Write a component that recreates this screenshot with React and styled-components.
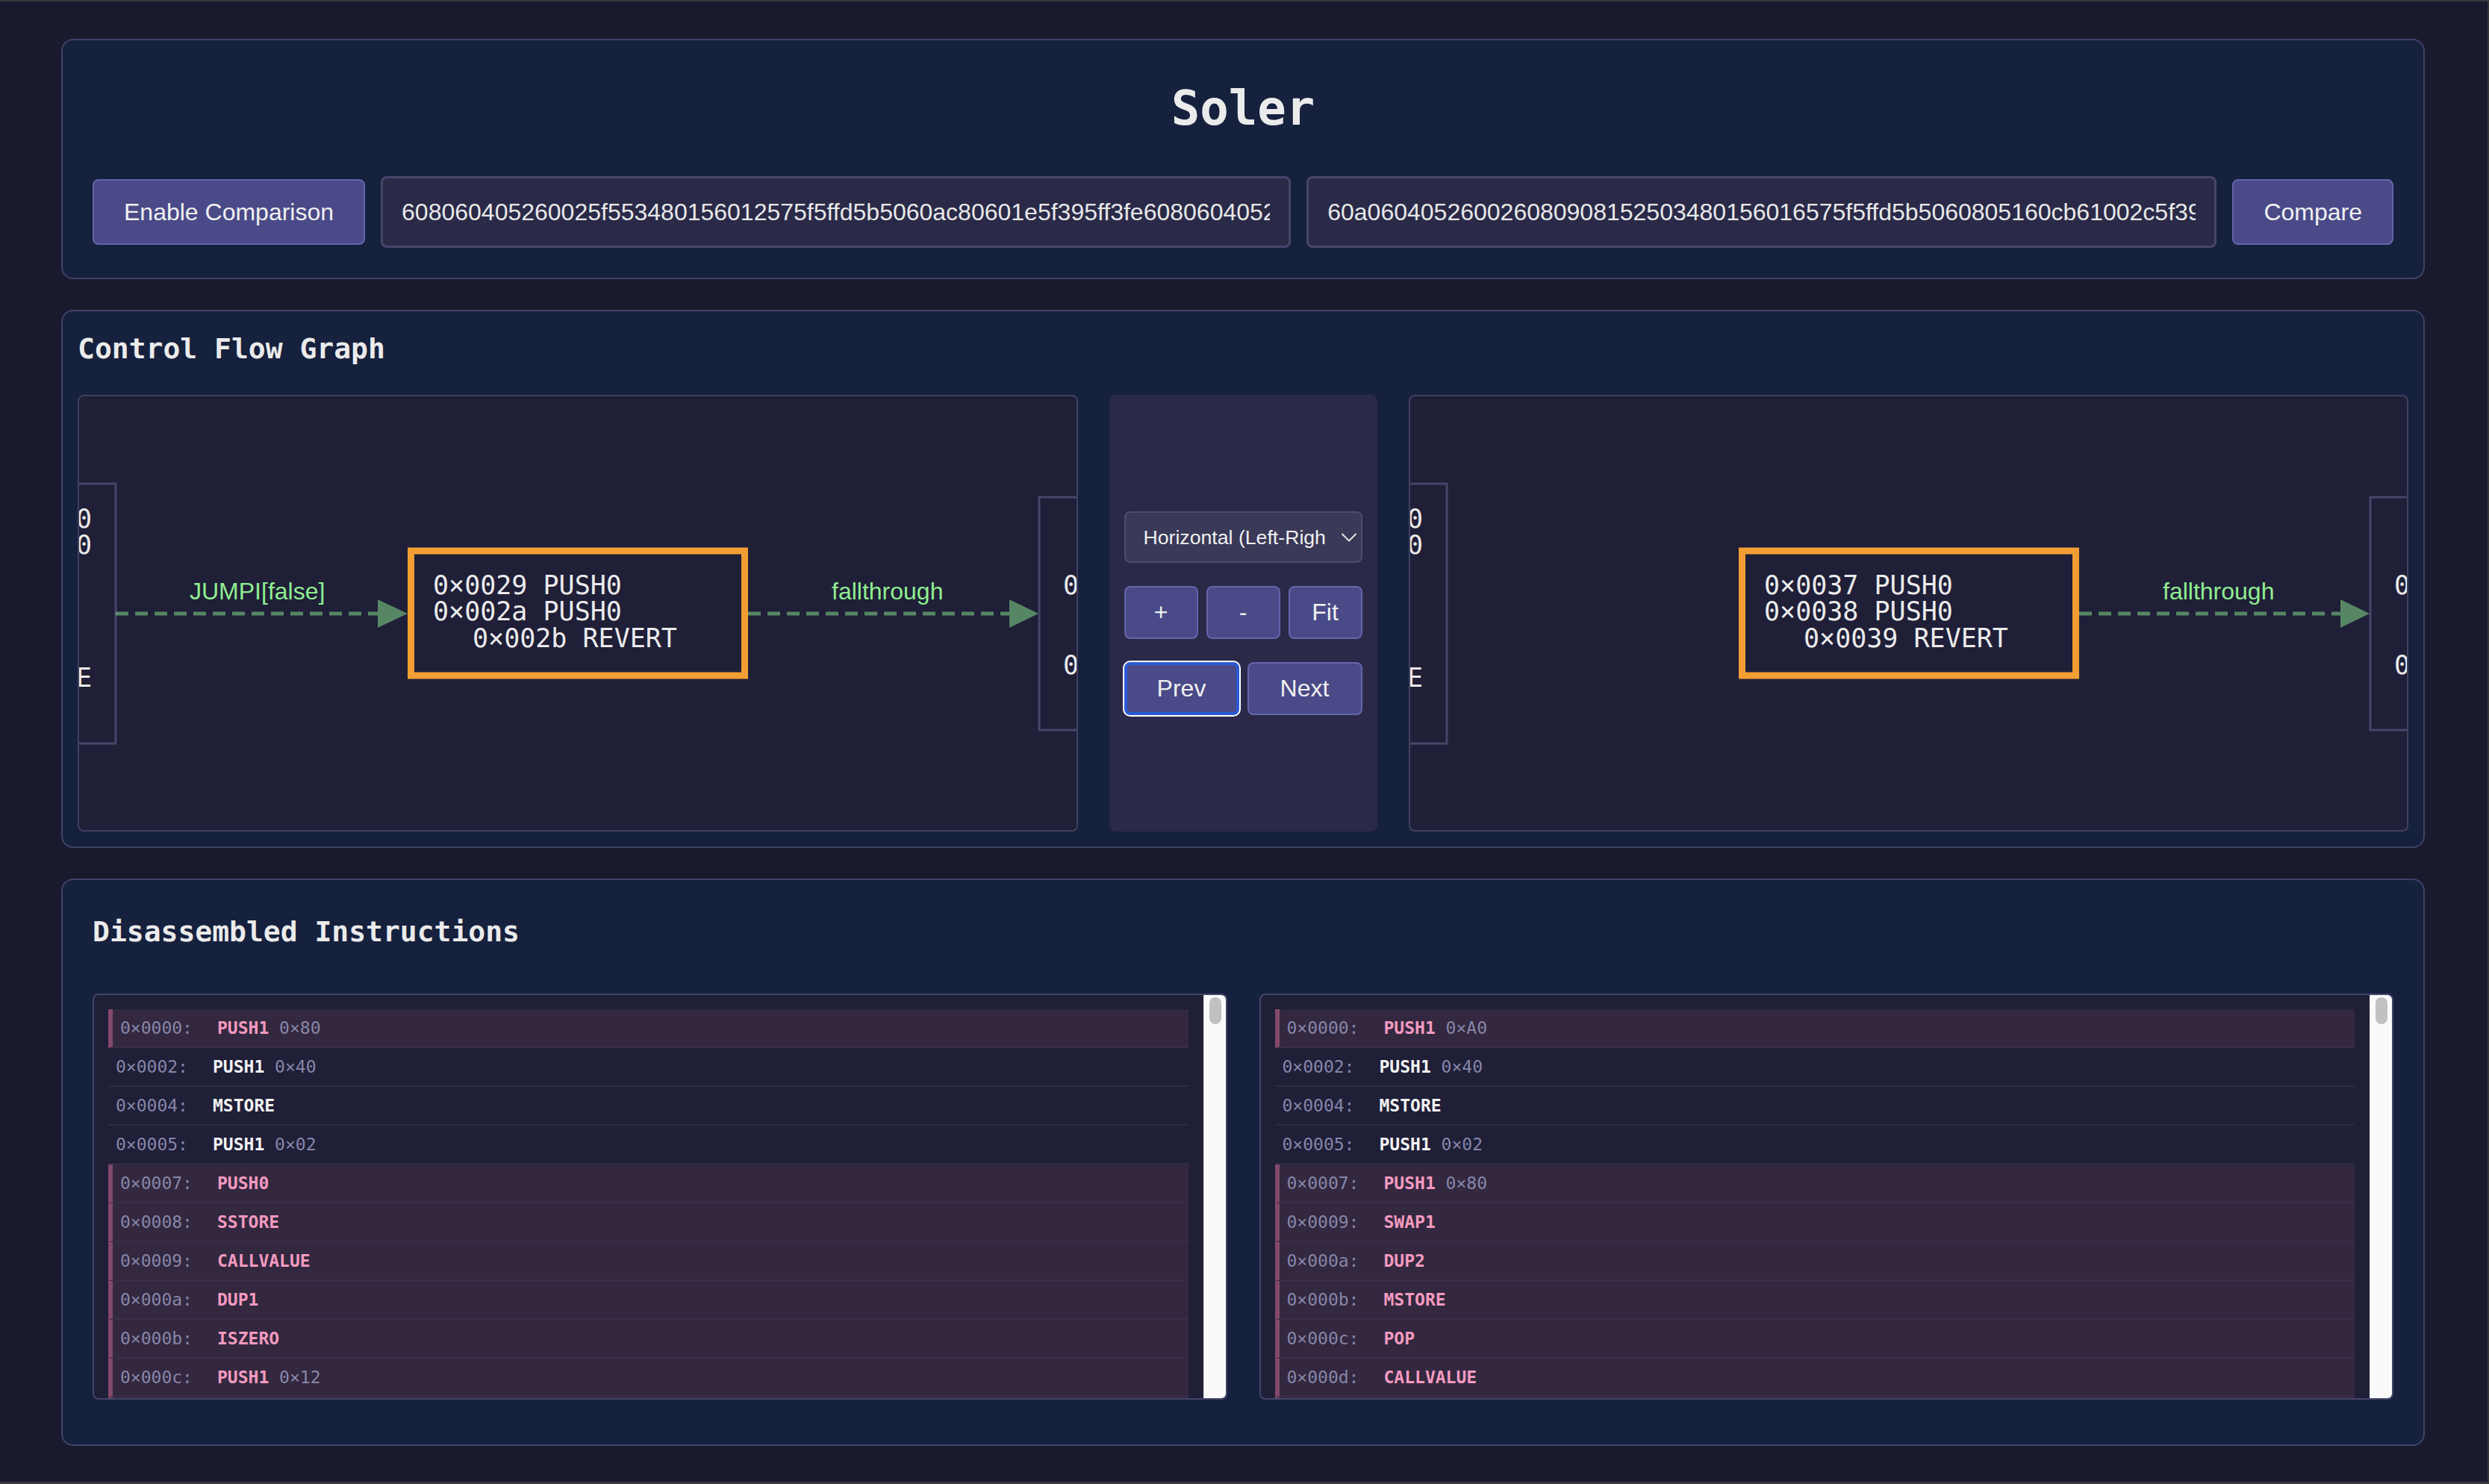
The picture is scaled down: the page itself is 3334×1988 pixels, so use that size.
import React from "react";
import styled, { createGlobalStyle } from "styled-components";
import { ChevronDown } from "lucide-react";

const MONO = `"DejaVu Sans Mono", "Liberation Mono", monospace`;
const SANS = `"Liberation Sans", Arial, sans-serif`;

const GlobalStyle = createGlobalStyle`
  html, body {
    margin: 0;
    padding: 0;
    background: #1a1a2e;
  }
  * {
    box-sizing: border-box;
  }
`;

const Page = styled.div`
  height: 100vh;
  overflow: hidden;
  display: flex;
  flex-direction: column;
  gap: 41px;
  padding: 50px 84px 0 82px;
  background: #1a1a2e;
  border-top: 2px solid #39393e;
  border-right: 2px solid #39393e;
  border-bottom: 3px solid #39393e;
`;

const Card = styled.section`
  background: #16213e;
  border: 2px solid #404268;
  border-radius: 16px;
  padding: ${({ $pad }) => $pad};
`;

const AppTitle = styled.h1`
  margin: 19px 0 59px;
  text-align: center;
  font: 700 64px/1 ${MONO};
  color: #ebebeb;
`;

const ControlsRow = styled.div`
  display: flex;
  align-items: center;
  gap: 21px;
`;

const PrimaryButton = styled.button`
  flex-shrink: 0;
  height: 88px;
  padding: 0 40px;
  background: #4a4a88;
  border: 2px solid #6565ad;
  border-radius: 8px;
  color: #f0f0f0;
  font: 32px ${SANS};
  cursor: pointer;
`;

const HexInput = styled.input`
  flex: 1;
  min-width: 0;
  height: 96px;
  padding: 0 25px;
  background: #2a2a48;
  border: 3px solid #46466b;
  border-radius: 8px;
  color: #e8e8e8;
  font: 32px ${SANS};
  outline: none;
`;

const SectionTitle = styled.h2`
  margin: ${({ $margin }) => $margin};
  font: 700 38px/1 ${MONO};
  color: #ebebeb;
`;

const GraphRow = styled.div`
  display: flex;
  gap: 42px;
  height: 585px;
`;

const GraphPanel = styled.div`
  flex: 1;
  min-width: 0;
  overflow: hidden;
  background: #1f1f38;
  border: 2px solid #40405f;
  border-radius: 8px;

  svg {
    display: block;
    width: 100%;
    height: 100%;
  }
`;

const ControlPanel = styled.div`
  width: 359px;
  flex-shrink: 0;
  display: flex;
  flex-direction: column;
  justify-content: center;
  gap: 31px;
  padding: 0 20px;
  background: #2a2948;
  border-radius: 8px;
`;

const SelectWrap = styled.div`
  position: relative;
  height: 69px;

  svg {
    position: absolute;
    right: 0;
    top: 50%;
    transform: translateY(-50%);
    pointer-events: none;
    color: #e6e6e6;
  }
`;

const LayoutSelect = styled.select`
  appearance: none;
  width: 100%;
  height: 100%;
  padding: 0 48px 0 24px;
  background: #3a3957;
  border: 2px solid #4d4c6e;
  border-radius: 8px;
  color: #f0f0f0;
  font: 26.67px ${SANS};
  outline: none;
`;

const ButtonGrid = styled.div`
  display: grid;
  grid-template-columns: repeat(${({ $cols }) => $cols}, 1fr);
  gap: 11px;
`;

const ToolButton = styled.button`
  height: 71px;
  padding: 0;
  background: #4a4a88;
  border: ${({ $focused }) =>
    $focused ? "4px solid #2a5bd7" : "2px solid #6565ad"};
  outline: ${({ $focused }) => ($focused ? "2px solid #ffffff" : "none")};
  border-radius: 8px;
  color: #f0f0f0;
  font: 32px ${SANS};
  cursor: pointer;
`;

const ListsRow = styled.div`
  display: flex;
  gap: 43px;
`;

const ListPanel = styled.div`
  flex: 1;
  min-width: 0;
  height: 544px;
  display: flex;
  overflow: hidden;
  background: #1f1f38;
  border: 2px solid #44446a;
  border-radius: 8px;
`;

const RowList = styled.div`
  flex: 1;
  min-width: 0;
  overflow: hidden;
  padding: 19px 20px 0 19px;
`;

const InstrRow = styled.div`
  height: 52px;
  display: flex;
  align-items: center;
  padding-left: 10px;
  background: ${({ $hl }) => ($hl ? "#33283f" : "transparent")};
  border-left: ${({ $hl }) => ($hl ? "6px solid #83496c" : "none")};
  border-bottom: 2px solid ${({ $hl }) => ($hl ? "#3a2e4a" : "#2b2b45")};
  font: 23px ${MONO};
  white-space: pre;
`;

const Addr = styled.span`
  width: 130px;
  flex-shrink: 0;
  color: #8786aa;
`;

const Op = styled.span`
  font-weight: 700;
  color: ${({ $hl }) => ($hl ? "#f49ac0" : "#f2f2f2")};
`;

const Arg = styled.span`
  color: #8786aa;
`;

const ScrollTrack = styled.div`
  width: 30px;
  flex-shrink: 0;
  padding: 3px 6px 0 7px;
  background: #fafafa;
  border-left: 1px solid #e4e4e4;
`;

const Thumb = styled.div`
  height: 36px;
  background: #c1c1c1;
  border-radius: 8px;
`;

const HEX_A =
  "608060405260025f553480156012575f5ffd5b5060ac80601e5f395ff3fe6080604052348015600e575f5ffd5b50600436106026575f3560e01c8063";
const HEX_B =
  "60a060405260026080908152503480156016575f5ffd5b5060805160cb61002c5f395ff3fe6080604052348015600e575f5ffd5b5060043610";

const LEFT_ROWS = [
  ["0×0000:", "PUSH1", "0×80", true],
  ["0×0002:", "PUSH1", "0×40", false],
  ["0×0004:", "MSTORE", "", false],
  ["0×0005:", "PUSH1", "0×02", false],
  ["0×0007:", "PUSH0", "", true],
  ["0×0008:", "SSTORE", "", true],
  ["0×0009:", "CALLVALUE", "", true],
  ["0×000a:", "DUP1", "", true],
  ["0×000b:", "ISZERO", "", true],
  ["0×000c:", "PUSH1", "0×12", true],
  ["0×000e:", "JUMPI", "", true],
  ["0×000f:", "PUSH0", "", true],
];

const RIGHT_ROWS = [
  ["0×0000:", "PUSH1", "0×A0", true],
  ["0×0002:", "PUSH1", "0×40", false],
  ["0×0004:", "MSTORE", "", false],
  ["0×0005:", "PUSH1", "0×02", false],
  ["0×0007:", "PUSH1", "0×80", true],
  ["0×0009:", "SWAP1", "", true],
  ["0×000a:", "DUP2", "", true],
  ["0×000b:", "MSTORE", "", true],
  ["0×000c:", "POP", "", true],
  ["0×000d:", "CALLVALUE", "", true],
  ["0×000e:", "DUP1", "", true],
  ["0×000f:", "ISZERO", "", true],
];

const EDGE = "rgba(144, 238, 144, 0.5)";
const nodeText = { fontFamily: MONO, fontSize: 35, fill: "#ebebeb" };
const edgeLabel = { fontFamily: SANS, fontSize: 32, fill: "#90ee90" };

const Edge = ({ x1, x2, tip, label, labelX }) => (
  <g>
    <line
      x1={x1}
      y1={291}
      x2={x2}
      y2={291}
      stroke={EDGE}
      strokeWidth={5}
      strokeDasharray="17 9"
    />
    <polygon points={`${x2},272 ${tip},291 ${x2},310`} fill={EDGE} />
    <text x={labelX} y={272} style={edgeLabel}>
      {label}
    </text>
  </g>
);

const Graph = ({ lines, incoming }) => (
  <svg>
    {/* clipped neighbour blocks */}
    <rect x={-300} y={117} width={349} height={348} fill="#1f1f38" stroke="#46466a" strokeWidth={3} />
    <text x={-4} y={176} style={nodeText}>0</text>
    <text x={-4} y={211} style={nodeText}>0</text>
    <text x={-4} y={389} style={nodeText}>E</text>

    <rect x={1286} y={135} width={400} height={312} fill="#1f1f38" stroke="#46466a" strokeWidth={3} />
    <text x={1318} y={265} style={nodeText}>0</text>
    <text x={1318} y={372} style={nodeText}>0</text>

    {incoming && (
      <Edge x1={49} x2={400} tip={440} label="JUMPI[false]" labelX={148} />
    )}
    <Edge x1={896} x2={1246} tip={1285} label="fallthrough" labelX={1008} />

    <rect x={444.5} y={207} width={447} height={167} fill="#1f1f38" stroke="#f29e33" strokeWidth={9} />
    <text x={474} y={265} style={nodeText}>{lines[0]}</text>
    <text x={474} y={300} style={nodeText}>{lines[1]}</text>
    <text x={527} y={336} style={nodeText}>{lines[2]}</text>
  </svg>
);

const Listing = ({ rows }) => (
  <ListPanel>
    <RowList>
      {rows.map(([addr, op, arg, hl]) => (
        <InstrRow key={addr} $hl={hl}>
          <Addr>{addr}</Addr>
          <Op $hl={hl}>{op}</Op>
          {arg && <Arg> {arg}</Arg>}
        </InstrRow>
      ))}
    </RowList>
    <ScrollTrack>
      <Thumb />
    </ScrollTrack>
  </ListPanel>
);

const App = () => (
  <>
    <GlobalStyle />
    <Page>
      <Card $pad="40px">
        <AppTitle>Soler</AppTitle>
        <ControlsRow>
          <PrimaryButton>Enable Comparison</PrimaryButton>
          <HexInput readOnly value={HEX_A} />
          <HexInput readOnly value={HEX_B} />
          <PrimaryButton>Compare</PrimaryButton>
        </ControlsRow>
      </Card>

      <Card $pad="20px">
        <SectionTitle $margin="11px 0 43px">Control Flow Graph</SectionTitle>
        <GraphRow>
          <GraphPanel>
            <Graph
              incoming
              lines={["0×0029 PUSH0", "0×002a PUSH0", "0×002b REVERT"]}
            />
          </GraphPanel>
          <ControlPanel>
            <SelectWrap>
              <LayoutSelect defaultValue="h">
                <option value="h">Horizontal (Left-Right)</option>
                <option value="v">Vertical (Top-Bottom)</option>
              </LayoutSelect>
              <ChevronDown size={36} strokeWidth={1.3} />
            </SelectWrap>
            <ButtonGrid $cols={3}>
              <ToolButton>+</ToolButton>
              <ToolButton>-</ToolButton>
              <ToolButton>Fit</ToolButton>
            </ButtonGrid>
            <ButtonGrid $cols={2}>
              <ToolButton $focused>Prev</ToolButton>
              <ToolButton>Next</ToolButton>
            </ButtonGrid>
          </ControlPanel>
          <GraphPanel>
            <Graph lines={["0×0037 PUSH0", "0×0038 PUSH0", "0×0039 REVERT"]} />
          </GraphPanel>
        </GraphRow>
      </Card>

      <Card $pad="40px 40px 60px">
        <SectionTitle $margin="10px 0 64px">Disassembled Instructions</SectionTitle>
        <ListsRow>
          <Listing rows={LEFT_ROWS} />
          <Listing rows={RIGHT_ROWS} />
        </ListsRow>
      </Card>
    </Page>
  </>
);

export default App;
